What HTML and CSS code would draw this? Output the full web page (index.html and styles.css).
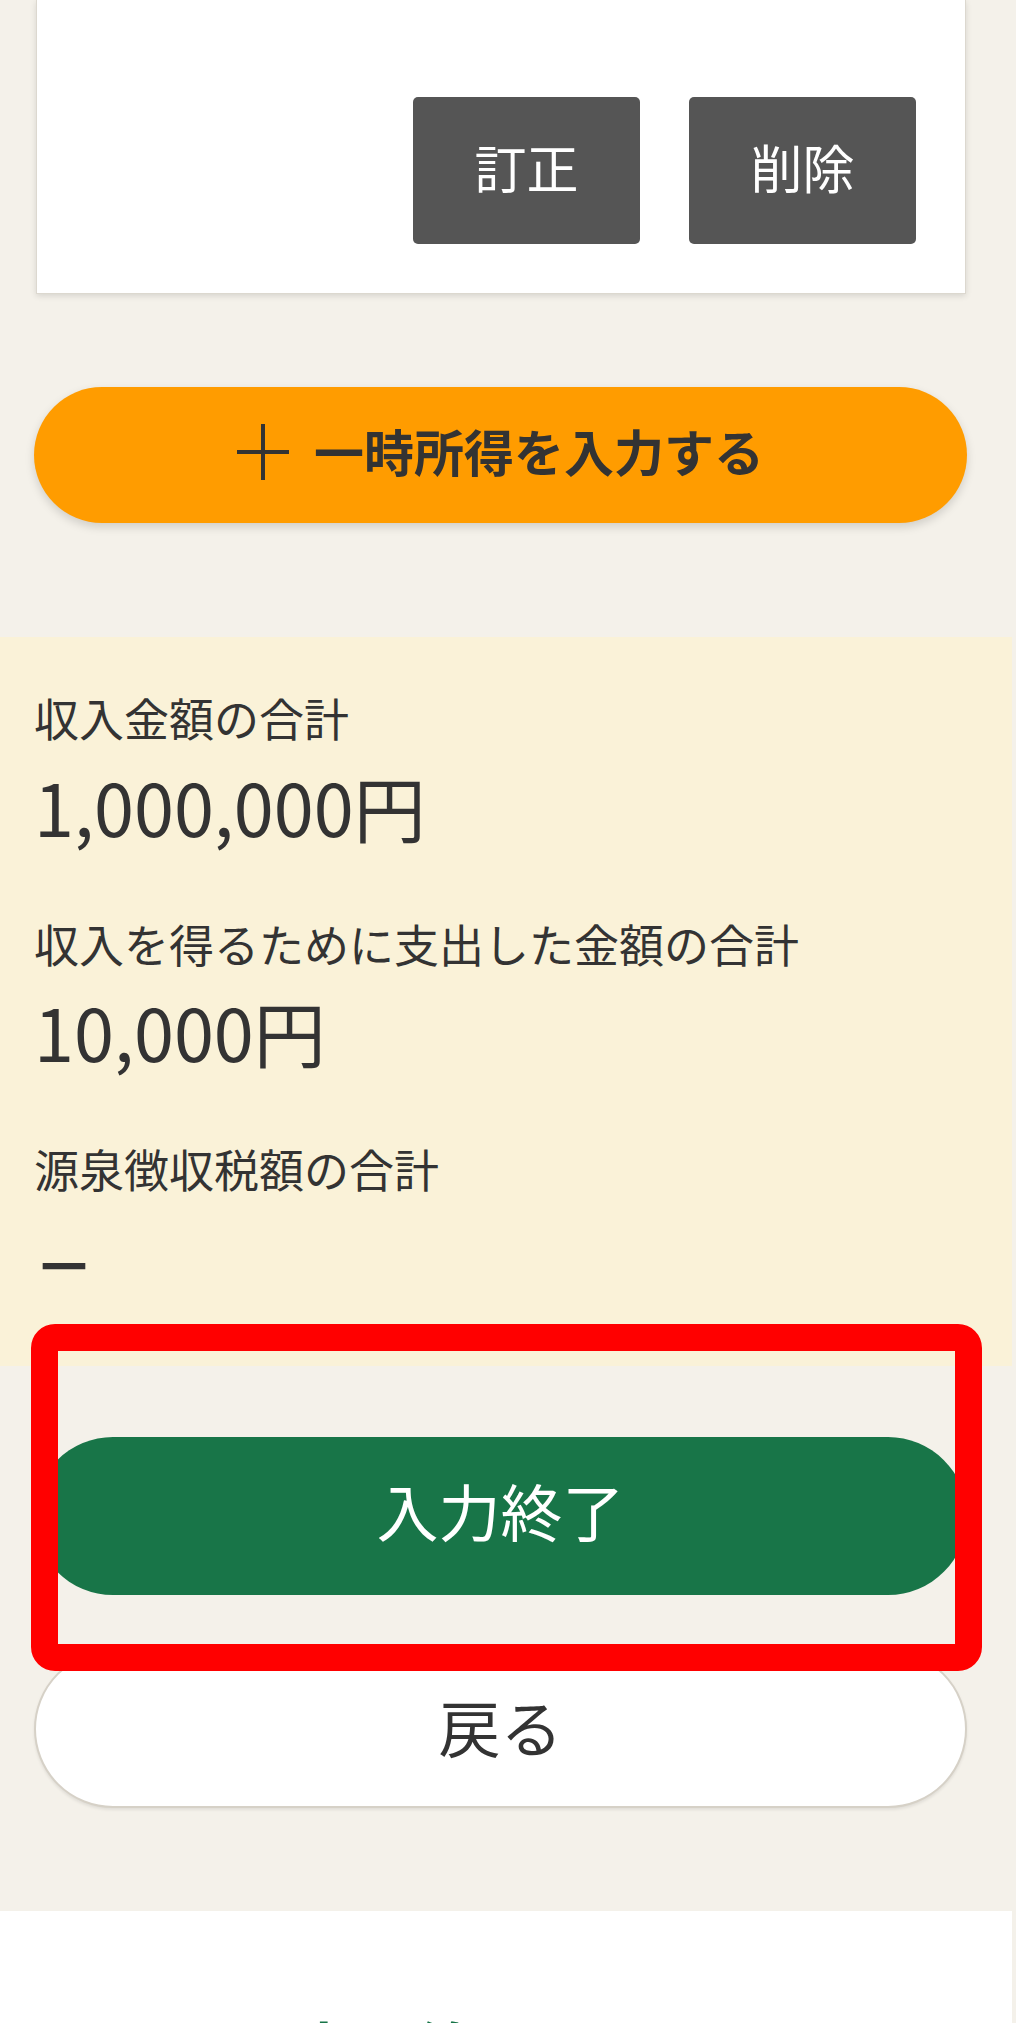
FILE: index.html
```
<!DOCTYPE html>
<html lang="ja">
<head>
    <meta charset="UTF-8">
    <meta name="viewport" content="width=device-width, initial-scale=1.0">
    <title>一時所得の入力</title>
    <link rel="stylesheet" href="styles.css">
</head>
<body>
<div class="page">

    <!-- 入力済みの一時所得 -->
    <div class="card">
        <div class="card-actions">
            <button class="btn-gray">訂正</button>
            <button class="btn-gray">削除</button>
        </div>
    </div>

    <button class="btn-add">
        <svg class="plus" width="52" height="56" viewBox="0 0 52 56">
            <line x1="0" y1="28" x2="52" y2="28" stroke="#333" stroke-width="4"/>
            <line x1="26" y1="0" x2="26" y2="56" stroke="#333" stroke-width="4"/>
        </svg>
        <span>一時所得を入力する</span>
    </button>

    <!-- 合計 -->
    <div class="summary">
        <div class="summary-label">収入金額の合計</div>
        <div class="summary-value">1,000,000円</div>
        <div class="summary-label">収入を得るために支出した金額の合計</div>
        <div class="summary-value">10,000円</div>
        <div class="summary-label">源泉徴収税額の合計</div>
        <div class="summary-value summary-none">－</div>
    </div>

    <div class="actions">
        <div class="finish-wrap">
            <button class="btn-finish">入力終了</button>
            <span class="highlight"></span>
        </div>
        <button class="btn-back">戻る</button>
    </div>

    <div class="info">
        <h2>入力の終了について</h2>
    </div>

</div>
</body>
</html>
```

FILE: styles.css
```
body {
    margin: 0;
    padding: 0;
    background-color: #f4f1ea;
    font-family: "Noto Sans CJK JP", "Noto Sans", sans-serif;
    color: #333333;
}
button {
    font-family: inherit;
    cursor: pointer;
}
.page {
    width: 1012px;
}

/* カード */
.card {
    margin: 0 46px 0 36px;
    padding: 97px 49px 49px;
    background-color: #ffffff;
    border: 1px solid #dcd8cf;
    border-top: 0;
    box-shadow: 0 2px 6px rgba(0, 0, 0, 0.12);
}
.card-actions {
    display: flex;
    justify-content: flex-end;
    gap: 49px;
}
.btn-gray {
    width: 227px;
    height: 147px;
    border: none;
    border-radius: 5px;
    background-color: #555555;
    color: #ffffff;
    font-size: 52px;
    padding: 0 0 8px;
}

/* 一時所得を入力する */
.btn-add {
    display: flex;
    align-items: center;
    justify-content: center;
    gap: 25px;
    width: 933px;
    height: 136px;
    margin: 93px 0 0 34px;
    padding: 0 0 6px;
    border: none;
    border-radius: 68px;
    background-color: #ff9c00;
    color: #333333;
    font-size: 50px;
    font-weight: bold;
    box-shadow: 0 4px 10px rgba(0, 0, 0, 0.15);
}
.btn-add span {
    line-height: 1;
    padding-bottom: 4px;
}

/* 合計 */
.summary {
    margin-top: 114px;
    padding: 47px 36px 55px 34px;
    background-color: #faf2d8;
}
.summary-label {
    font-size: 45px;
    line-height: 1.5;
}
.summary-value {
    font-size: 72px;
    line-height: 1.5;
    margin-bottom: 50px;
}
.summary-value:last-child {
    margin-bottom: 0;
}
.summary-none {
    font-size: 60px;
    font-weight: bold;
    line-height: 108px;
    padding-top: 6px;
    height: 102px;
}

/* ボタン */
.actions {
    margin-top: 71px;
    padding: 0 45px 0 34px;
}
.finish-wrap {
    position: relative;
}
.btn-finish {
    display: block;
    width: 100%;
    height: 158px;
    padding: 0 0 12px;
    border: none;
    border-radius: 79px;
    background-color: #187548;
    color: #ffffff;
    font-size: 62px;
}
.highlight {
    position: absolute;
    top: -113px;
    bottom: -76px;
    left: -3px;
    right: -15px;
    border: 27px solid #ff0000;
    border-radius: 24px;
}
.btn-back {
    display: block;
    width: 100%;
    height: 158px;
    margin-top: 55px;
    padding: 0 0 6px;
    border: 2px solid #d6d1c7;
    border-radius: 79px;
    background-color: #ffffff;
    color: #333333;
    font-size: 62px;
    box-shadow: 0 2px 3px rgba(0, 0, 0, 0.08);
}

/* 下部 */
.info {
    margin-top: 103px;
    padding: 100px 0 200px;
    background-color: #ffffff;
    text-align: center;
}
.info h2 {
    margin: 0;
    font-size: 60px;
    color: #187548;
    line-height: 1.2;
}
```
